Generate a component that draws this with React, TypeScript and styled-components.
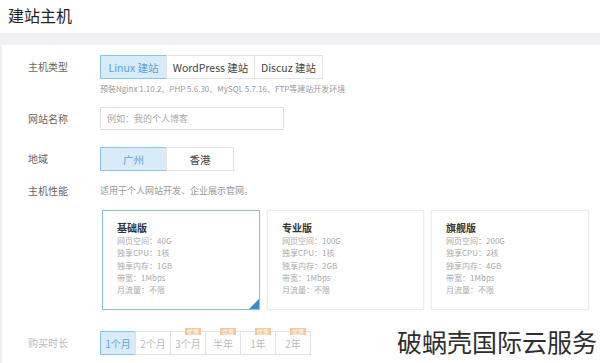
import React from 'react'
import styled, { createGlobalStyle } from 'styled-components'

const Global = createGlobalStyle`
  body {
    margin: 0;
    background: #fff;
    font-family: "Noto Sans CJK SC", "Liberation Sans", sans-serif;
    color: #333;
  }
`

const Page = styled.div`
  width: 600px;
  height: 363px;
  overflow: hidden;
  position: relative;
  background: #f0f0f4;
`

const Header = styled.div`
  height: 33px;
  background: #fff;
  padding-left: 8px;
  font-size: 16px;
  line-height: 30px;
  color: #222;
`

const Panel = styled.div`
  margin: 12px 0 0 2px;
  background: #fff;
  padding-top: 10px;
  height: 400px;
`

const Row = styled.div<{ $mt?: number }>`
  display: flex;
  margin-top: ${p => p.$mt ?? 0}px;
`

const Label = styled.div<{ $faded?: boolean }>`
  width: 98px;
  padding-left: 26px;
  box-sizing: border-box;
  font-size: 10px;
  color: ${p => (p.$faded ? '#bbb' : '#666')};
  line-height: 24px;
  flex-shrink: 0;
`

const Field = styled.div`
  display: flex;
  flex-direction: column;
`

const Group = styled.div`
  display: flex;
`

const Seg = styled.div<{ $w: number; $active?: boolean; $faded?: boolean }>`
  width: ${p => p.$w}px;
  height: 24px;
  box-sizing: border-box;
  border: 1px solid ${p => (p.$active ? '#8cc3ea' : '#e2e2e2')};
  margin-left: -1px;
  background: ${p => (p.$active ? '#d8ebf9' : '#fff')};
  color: ${p => (p.$active ? '#5aa3d8' : p.$faded ? '#bbb' : '#444')};
  font-size: ${p => (p.$faded ? 10 : 10.5)}px;
  display: flex;
  align-items: center;
  justify-content: center;
  position: relative;
  &:first-child {
    margin-left: 0;
  }
`

const Badge = styled.span`
  position: absolute;
  right: 4px;
  top: -4px;
  background: #f5c89a;
  color: #fff;
  font-size: 6px;
  line-height: 7px;
  padding: 0 2px;
`

const Hint = styled.div`
  font-size: 8px;
  color: #999;
  margin-top: 4px;
  white-space: nowrap;
`

const Input = styled.div`
  width: 184px;
  height: 23px;
  box-sizing: border-box;
  border: 1px solid #e0e0e0;
  font-size: 9px;
  color: #aaa;
  padding-left: 6px;
  display: flex;
  align-items: center;
`

const Desc = styled.div`
  font-size: 9px;
  color: #999;
  line-height: 24px;
`

const Cards = styled.div`
  display: flex;
  gap: 7px;
  margin-left: 100px;
  margin-top: 7px;
`

const Card = styled.div<{ $active?: boolean; $w: number }>`
  width: ${p => p.$w}px;
  height: 100px;
  box-sizing: border-box;
  border: 1px solid ${p => (p.$active ? '#8ec4c8' : '#ececec')};
  box-shadow: 0 0 2px rgba(0, 0, 0, 0.06);
  padding: 10px 0 0 14px;
  position: relative;
  overflow: hidden;
`

const Corner = styled.div`
  position: absolute;
  right: 0;
  bottom: 0;
  width: 0;
  height: 0;
  border-left: 10px solid transparent;
  border-bottom: 10px solid #3a8dcc;
`

const CardTitle = styled.div`
  font-size: 10px;
  font-weight: bold;
  color: #333;
  line-height: 14px;
`

const Spec = styled.div`
  font-size: 8px;
  color: #aaa;
  line-height: 12.3px;
`

const Watermark = styled.div`
  position: absolute;
  right: 1px;
  bottom: 4px;
  background: #fff;
  padding: 0 2px 0 6px;
  font-size: 25px;
  line-height: 36px;
  color: #2e2e2e;
`

const plans = [
  { name: '基础版', w: 158, disk: '40G', cpu: '1核', mem: '1GB', active: true },
  { name: '专业版', w: 157, disk: '100G', cpu: '1核', mem: '2GB' },
  { name: '旗舰版', w: 158, disk: '200G', cpu: '2核', mem: '4GB' },
]

const durations = [
  { t: '1个月', active: true },
  { t: '2个月' },
  { t: '3个月', badge: true },
  { t: '半年', badge: true },
  { t: '1年', badge: true },
  { t: '2年', badge: true },
]

export default function App() {
  return (
    <Page>
      <Global />
      <Header>建站主机</Header>
      <Panel>
        <Row>
          <Label>主机类型</Label>
          <Field>
            <Group>
              <Seg $w={67} $active>Linux 建站</Seg>
              <Seg $w={89}>WordPress 建站</Seg>
              <Seg $w={69}>Discuz 建站</Seg>
            </Group>
            <Hint>预装Nginx 1.10.2、PHP 5.6.30、MySQL 5.7.16、FTP等建站开发环境</Hint>
          </Field>
        </Row>
        <Row $mt={13}>
          <Label>网站名称</Label>
          <Input>例如：我的个人博客</Input>
        </Row>
        <Row $mt={16}>
          <Label>地域</Label>
          <Group>
            <Seg $w={67} $active>广州</Seg>
            <Seg $w={68}>香港</Seg>
          </Group>
        </Row>
        <Row $mt={8}>
          <Label>主机性能</Label>
          <Desc>适用于个人网站开发、企业展示官网。</Desc>
        </Row>
        <Cards>
          {plans.map(p => (
            <Card key={p.name} $w={p.w} $active={p.active}>
              <CardTitle>{p.name}</CardTitle>
              <Spec>网页空间：{p.disk}</Spec>
              <Spec>独享CPU：{p.cpu}</Spec>
              <Spec>独享内存：{p.mem}</Spec>
              <Spec>带宽：1Mbps</Spec>
              <Spec>月流量：不限</Spec>
              {p.active && <Corner />}
            </Card>
          ))}
        </Cards>
        <Row $mt={21}>
          <Label $faded>购买时长</Label>
          <Group>
            {durations.map(d => (
              <Seg key={d.t} $w={36} $active={d.active} $faded>
                {d.t}
                {d.badge && <Badge>优惠</Badge>}
              </Seg>
            ))}
          </Group>
        </Row>
      </Panel>
      <Watermark>破蜗壳国际云服务</Watermark>
    </Page>
  )
}
